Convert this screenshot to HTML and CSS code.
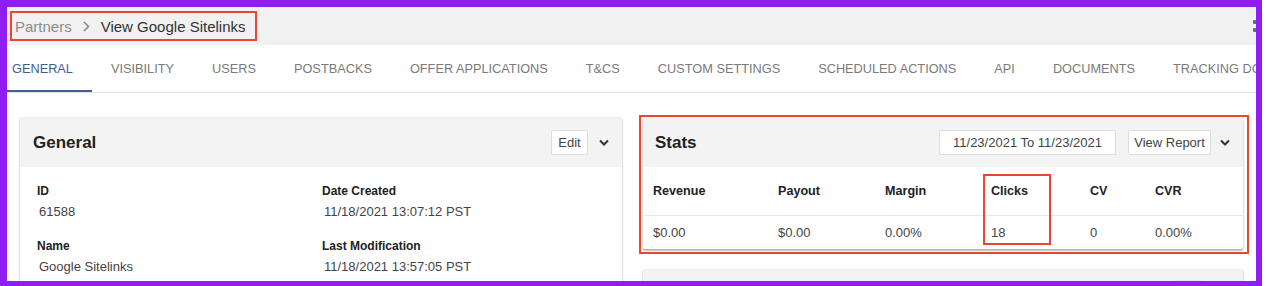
FILE: index.html
```html
<!DOCTYPE html>
<html lang="en">
<head>
<meta charset="utf-8">
<title>View Google Sitelinks</title>
<link rel="stylesheet" href="styles.css">
</head>
<body>
<div class="frame">
  <div class="topbar">
    <div class="crumbs">
      <span class="crumb-muted">Partners</span>
      <svg class="crumb-sep" width="7" height="11" viewBox="0 0 7 11"><path d="M1 1l4.5 4.5L1 10" fill="none" stroke="#8a8a8a" stroke-width="1.6"/></svg>
      <span class="crumb-current">View Google Sitelinks</span>
    </div>
    <div class="kebab"><i></i><i></i></div>
  </div>

  <nav class="tabs">
    <span class="tab active">General</span>
    <span class="tab">Visibility</span>
    <span class="tab">Users</span>
    <span class="tab">Postbacks</span>
    <span class="tab">Offer Applications</span>
    <span class="tab">T&amp;Cs</span>
    <span class="tab">Custom Settings</span>
    <span class="tab">Scheduled Actions</span>
    <span class="tab">API</span>
    <span class="tab">Documents</span>
    <span class="tab">Tracking Domains</span>
  </nav>

  <main class="content">
    <section class="card general">
      <header class="card-head">
        <h2 class="card-title">General</h2>
        <div class="head-actions">
          <button class="btn btn-edit">Edit</button>
          <svg class="chev" width="10" height="8" viewBox="0 0 10 8"><path d="M1 1.5L5 5.5l4-4" fill="none" stroke="#333" stroke-width="2"/></svg>
        </div>
      </header>
      <div class="fields">
        <div class="field"><div class="label">ID</div><div class="value">61588</div></div>
        <div class="field"><div class="label">Date Created</div><div class="value">11/18/2021 13:07:12 PST</div></div>
        <div class="field"><div class="label">Name</div><div class="value">Google Sitelinks</div></div>
        <div class="field"><div class="label">Last Modification</div><div class="value">11/18/2021 13:57:05 PST</div></div>
      </div>
    </section>

    <div class="col">
      <section class="card stats">
        <header class="card-head">
          <h2 class="card-title">Stats</h2>
          <div class="head-actions">
            <div class="date-range">11/23/2021 To 11/23/2021</div>
            <button class="btn btn-report">View Report</button>
            <svg class="chev" width="10" height="8" viewBox="0 0 10 8"><path d="M1 1.5L5 5.5l4-4" fill="none" stroke="#333" stroke-width="2"/></svg>
          </div>
        </header>
        <div class="stats-table">
          <div class="th">Revenue</div>
          <div class="th">Payout</div>
          <div class="th">Margin</div>
          <div class="th">Clicks</div>
          <div class="th">CV</div>
          <div class="th">CVR</div>
          <div class="td">$0.00</div>
          <div class="td">$0.00</div>
          <div class="td">0.00%</div>
          <div class="td">18</div>
          <div class="td">0</div>
          <div class="td">0.00%</div>
        </div>
        <div class="mark-card"></div>
        <div class="mark-clicks"></div>
      </section>

      <section class="card next">
        <header class="card-head next-head">
          <span class="ghost-btn"></span>
        </header>
        <div class="next-body"></div>
      </section>
    </div>
  </main>
</div>
</body>
</html>
```
FILE: styles.css
```css
html, body {
  margin: 0;
  padding: 0;
  background: #fff;
}

body {
  width: 1266px;
  height: 286px;
  overflow: hidden;
  font-family: "Liberation Sans", Arial, Helvetica, sans-serif;
  color: #333;
}

.frame {
  box-sizing: border-box;
  width: 1262px;
  height: 286px;
  border-style: solid;
  border-color: #911ef0;
  border-width: 7px 6px 5px 7px;
  overflow: hidden;
  background: #fff;
}

/* top breadcrumb bar */
.topbar {
  height: 38px;
  background: #f1f1f1;
  display: flex;
  align-items: center;
  justify-content: space-between;
  padding-left: 3px;
}

.crumbs {
  box-sizing: border-box;
  height: 30px;
  border: 2px solid #e8462f;
  display: flex;
  align-items: center;
  padding: 0 9px 0 3px;
  font-size: 15px;
}

.crumb-muted { color: #8c8c8c; }
.crumb-current { color: #333; }
.crumb-sep { margin: 0 11px 0 11px; }

.kebab {
  display: flex;
  flex-direction: column;
  gap: 4px;
  width: 3px;
}
.kebab i {
  display: block;
  width: 4px;
  height: 4px;
  background: #6b6b6b;
  border-radius: 1px;
}

/* tabs */
.tabs {
  display: flex;
  margin-left: -14px;
  border-bottom: 1px solid #e4e4e4;
  white-space: nowrap;
}

.tab {
  box-sizing: border-box;
  padding: 3px 19px 0;
  height: 47px;
  line-height: 42px;
  border-bottom: 2px solid transparent;
  font-size: 12.75px;
  color: #7a7a7a;
  text-transform: uppercase;
  flex: none;
}

.tab.active {
  color: #3f5e96;
  border-bottom-color: #3f5e96;
}

/* content */
.content {
  display: grid;
  grid-template-columns: 602px 600px;
  column-gap: 21px;
  padding: 25px 13px 0;
  align-items: start;
}

.col {
  display: flex;
  flex-direction: column;
  gap: 21px;
}

.card {
  position: relative;
  background: #fff;
  border-radius: 2px;
  box-shadow: 0 0 0 1px rgba(0,0,0,0.05), 0 1px 3px rgba(0,0,0,0.18);
}

.card-head {
  height: 49px;
  background: #f3f3f3;
  display: flex;
  align-items: center;
  justify-content: space-between;
  padding: 0 13px;
  border-radius: 2px 2px 0 0;
}

.card-title {
  margin: 0;
  font-size: 17px;
  font-weight: bold;
  color: #222;
}

.stats .card-head { padding-left: 12px; }

.head-actions {
  display: flex;
  align-items: center;
}

.btn {
  box-sizing: border-box;
  height: 25px;
  padding: 0 6px;
  background: #fff;
  border: 1px solid #dedede;
  border-radius: 2px;
  font-family: inherit;
  font-size: 13px;
  color: #444;
}

.btn-edit { width: 37px; padding: 0; }
.btn-report { width: 83px; padding: 0; }

.chev { margin-left: 10px; display: block; }
.general .chev { margin-left: 11px; }
.stats .chev { margin-left: 9px; }

.date-range {
  box-sizing: border-box;
  width: 177px;
  height: 25px;
  line-height: 23px;
  border: 1px solid #dedede;
  background: #fff;
  text-align: center;
  font-size: 13px;
  color: #444;
  margin-right: 12px;
}

/* general fields */
.fields {
  display: grid;
  grid-template-columns: 285px 285px;
  row-gap: 20px;
  padding: 17px 17px 40px;
}

.label {
  font-size: 12px;
  font-weight: bold;
  line-height: 14px;
  color: #222;
}

.value {
  margin-top: 6px;
  padding-left: 2px;
  font-size: 13px;
  line-height: 15px;
  color: #444;
}

/* stats table */
.stats {
  box-shadow: 0 0 0 1px rgba(0,0,0,0.05), 0 2px 2px rgba(0,0,0,0.28);
}

.stats-table {
  display: grid;
  grid-template-columns: 135px 107px 106px 99px 65px 1fr;
}

.th:nth-child(6n+1), .td:nth-child(6n+1) {
  padding-left: 10px;
}

.th {
  height: 48px;
  line-height: 48px;
  border-bottom: 1px solid #e8e8e8;
  font-size: 12.6px;
  font-weight: bold;
  color: #222;
}

.td {
  height: 33px;
  line-height: 33px;
  font-size: 13px;
  color: #444;
}

.mark-card {
  position: absolute;
  top: -3px;
  left: -4px;
  right: -6px;
  bottom: -5px;
  border: 2px solid #e8462f;
  pointer-events: none;
}

.mark-clicks {
  position: absolute;
  left: 340px;
  top: 56px;
  width: 68px;
  height: 71px;
  box-sizing: border-box;
  border: 2px solid #e8462f;
  pointer-events: none;
}

/* next card (cut off) */
.next-head {
  align-items: flex-start;
  justify-content: flex-end;
  padding-top: 10px;
  padding-right: 41px;
  box-sizing: border-box;
}
.ghost-btn {
  display: block;
  width: 29px;
  height: 25px;
  background: #e9e9e9;
  border-radius: 2px;
}
.next-body { height: 40px; }
```
